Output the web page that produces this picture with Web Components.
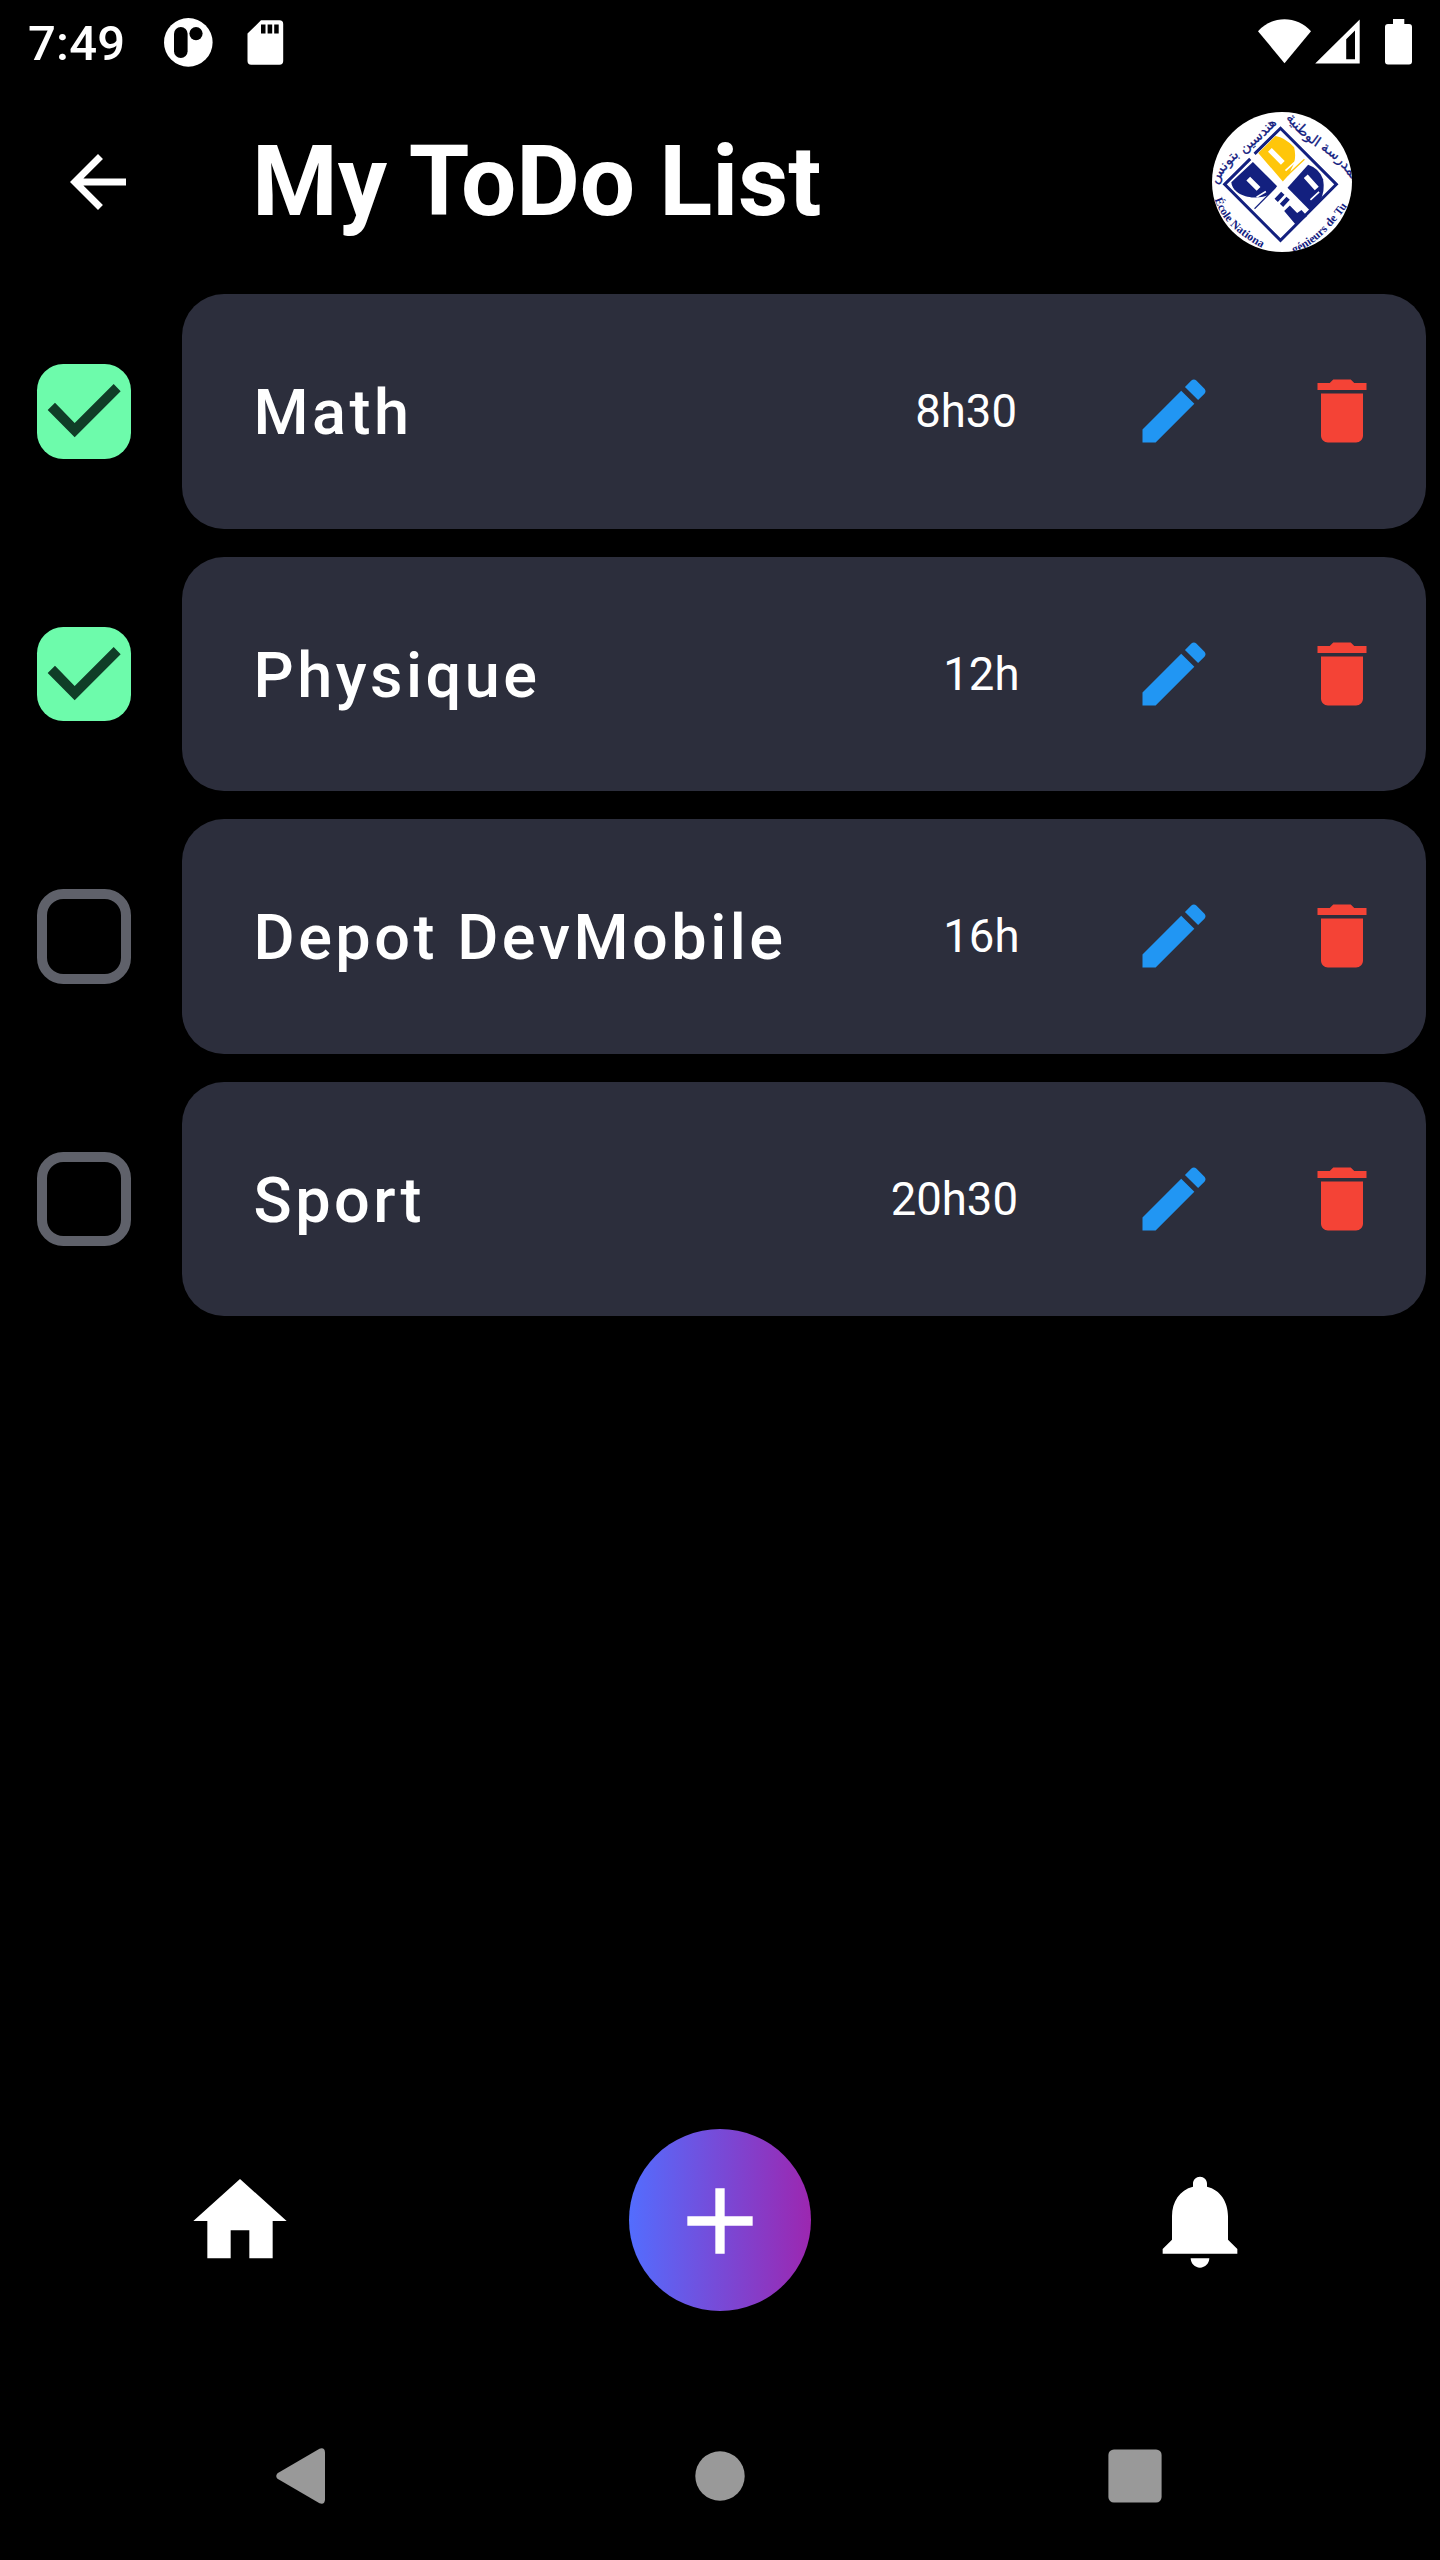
<!DOCTYPE html>
<html lang="fr">
<head>
<meta charset="utf-8">
<title>My ToDo List</title>
<style>
  html, body { margin: 0; background: #000; }
  body { width: 1440px; height: 2560px; overflow: hidden; font-family: Roboto, "Liberation Sans", sans-serif; color: #fff; }
</style>
</head>
<body>
<todo-app></todo-app>
<script>
const define = (name, html, setup) => customElements.define(name, class extends HTMLElement {
  constructor() {
    super();
    this.attachShadow({ mode: 'open' });
  }
  connectedCallback() {
    this.shadowRoot.innerHTML = html;
    if (setup) setup(this, this.shadowRoot);
  }
});

const ICONS = {
  back: 'M20 11H7.83l5.59-5.59L12 4l-8 8 8 8 1.41-1.41L7.83 13H20v-2z',
  edit: 'M3 17.25V21h3.75L17.81 9.94l-3.75-3.75L3 17.25zM20.71 7.04c.39-.39.39-1.02 0-1.41l-2.34-2.34c-.39-.39-1.02-.39-1.41 0l-1.83 1.83 3.75 3.75 1.83-1.83z',
  trash: 'M6 19c0 1.1.9 2 2 2h8c1.1 0 2-.9 2-2V7H6v12zM19 4h-3.5l-1-1h-5l-1 1H5v2h14V4z',
  home: 'M10 20v-6h4v6h5v-8h3L12 3 2 12h3v8z',
  add: 'M19 13h-6v6h-2v-6H5v-2h6V5h2v6h6v2z',
  bell: 'M12 22c1.1 0 2-.9 2-2h-4c0 1.1.89 2 2 2zm6-6v-5c0-3.07-1.64-5.64-4.5-6.32V4c0-.83-.67-1.5-1.5-1.5s-1.5.67-1.5 1.5v.68C7.63 5.36 6 7.92 6 11v5l-2 2v1h16v-1l-2-2z'
};

define('md-icon', `
  <style>
    :host { display: block; width: 84px; height: 84px; flex: none; }
    svg { display: block; width: 100%; height: 100%; fill: currentColor; }
  </style>
  <svg viewBox="0 0 24 24"><path/></svg>`,
  (el, root) => root.querySelector('path').setAttribute('d', ICONS[el.getAttribute('name')]));

define('status-bar', `
  <style>
    :host { display: flex; height: 84px; box-sizing: border-box; justify-content: space-between; padding: 0 28px; }
    .left, .right { display: flex; align-items: center; }
    .time { font-size: 49px; font-weight: 500; line-height: 58px; padding-top: 3px; letter-spacing: .2px; width: 136px; }
    svg { display: block; fill: #fff; }
  </style>
  <div class="left">
    <span class="time">7:49</span>
    <svg width="130" height="84" viewBox="164 0 130 84">
      <circle cx="188.3" cy="42.4" r="24.3"/>
      <rect x="174" y="27" width="13.6" height="31" rx="6.8" fill="#000"/>
      <circle cx="196" cy="33.6" r="6.6" fill="#000"/>
      <path d="M261 20.3h18.500a3.700 3.700 0 0 1 3.700 3.700v37a3.700 3.700 0 0 1-3.700 3.700h-28.300a3.700 3.700 0 0 1-3.700-3.700v-27.500z"/>
      <path fill="#000" d="M261 24.500h4.500v9h-4.500zM267.600 24.500h4.600v9h-4.600zM274.200 24.500h4.500v9h-4.500z"/>
    </svg>
  </div>
  <div class="right">
    <svg width="156" height="84" viewBox="1256 0 156 84">
      <path d="M1258 31.200C1272 15.200 1297 15.200 1311 31.200L1284.500 63.200z"/>
      <path fill-rule="evenodd" d="M1359.700 19.500V63.600H1315.200zM1355 30.500L1346.200 39.300V59.200H1355z"/>
      <path d="M1393 19h11.300v5h4.700a3 3 0 0 1 3 3v34.600a3 3 0 0 1-3 3h-21a3 3 0 0 1-3-3v-34.600a3 3 0 0 1 3-3h5z"/>
    </svg>
  </div>`);

define('school-logo', `
  <style>
    :host { display: block; width: 140px; height: 140px; border-radius: 50%; overflow: hidden; background: #fff; }
    svg { display: block; }
    text { fill: #13207f; font-family: "Liberation Serif", serif; font-weight: 700; font-size: 35px; text-rendering: geometricPrecision; }
    .ar { font-family: "DejaVu Sans", sans-serif; font-weight: 400; font-size: 42px; stroke: #13207f; stroke-width: .8px; }
  </style>
  <svg width="140" height="140" viewBox="66 66 421 421">
    <defs>
      <path id="fl" d="M74 328Q94 390 150 432T250 490"/>
      <path id="fr" d="M312 491Q370 468 418 416T492 318"/>
      <path id="al" d="M80 284Q114 219 167 184T276 82"/>
      <path id="ar" d="M288 84Q340 150 394 180T492 278"/>
    </defs>
    <g fill="none" stroke="#13207f" stroke-width="9">
      <path d="M181 207L104 283.500L272 452L440 283.500L272 115L194 192"/>
      <path d="M258 292L194 357" stroke-width="3.500"/>
    </g>
    <path fill="#ffc60a" d="M257 138L205 189L279 275L300 252L304 238Q322 210 313 172Q285 142 257 138z"/>
    <path stroke="#ffc60a" stroke-width="4" d="M292 257L344 208"/>
    <path stroke="#fff" stroke-width="16" d="M240 180L279 219"/>
    <path stroke="#fff" stroke-width="5" d="M287 242L316 216"/>
    <g fill="#13207f">
      <path d="M189 216L262 289L236 315C205 332 130 324 124 277z"/>
      <path d="M355 225Q388 236 400 268Q407 305 390 335L362 364L293 294z"/>
      <path d="M254 327L274 306L284 315L264 337zM270 342L290 321L300 330L280 352zM283 364L300 347L322 370L335 361L352 379L318 405z"/>
    </g>
    <path stroke="#fff" stroke-width="16" d="M175 266L206 297M348 259L381 296"/>
    <path stroke="#fff" stroke-width="5" d="M200 322L228 305M362 330L388 306"/>
    <text><textPath href="#fl">École Nationa</textPath></text>
    <text><textPath href="#fr">génieurs de Tu</textPath></text>
    <text class="ar"><textPath href="#al">هندسين بتونس</textPath></text>
    <text class="ar"><textPath href="#ar">المدرسة الوطنية</textPath></text>
  </svg>`);

define('app-header', `
  <style>
    :host { display: flex; align-items: center; height: 196px; padding: 0 88px 0 56px; }
    h1 { flex: 1; margin: 0 0 0 112px; font-size: 98px; line-height: 116px; font-weight: 700; letter-spacing: -.1px; white-space: nowrap; }
  </style>
  <md-icon name="back"></md-icon>
  <h1><slot></slot></h1>
  <school-logo></school-logo>`);

define('check-box', `
  <style>
    :host { display: block; width: 94.5px; height: 94.5px; }
    .box { box-sizing: border-box; width: 100%; height: 100%; border: 10.5px solid #5f616a; border-radius: 26.25px; }
    svg { display: none; width: 100%; height: 100%; }
    :host([checked]) .box { border: 0; background: #6dfbab; }
    :host([checked]) svg { display: block; }
  </style>
  <div class="box"><svg viewBox="0 0 283.500 283.500"><path fill="#103d27" d="M32 138L113 220L251 82L230 60L113 177L54 116z"/></svg></div>`);

define('todo-item', `
  <style>
    :host { display: flex; align-items: center; height: 234.5px; padding: 0 14px 0 36.75px; gap: 50.75px; }
    .card { flex: 1; box-sizing: border-box; height: 100%; display: flex; align-items: center; padding: 0 42px 0 71.5px;
            background: #2c2e3c; border-radius: 42px; }
    .name { flex: 1; font-size: 63px; font-weight: 500; letter-spacing: 3.5px; line-height: 74px; white-space: nowrap; padding-top: 4px; }
    .time { font-size: 45.5px; line-height: 54px; padding-top: 2px; }
    .icons { display: flex; gap: 84px; width: 252px; margin-left: 114px; }
    .edit { color: #2196f3; }
    .trash { color: #f44336; }
    :host([time="8h30"]) .icons { margin-left: 115px; }
    :host([time="12h"]) .icons, :host([time="16h"]) .icons { margin-left: 112.5px; }
  </style>
  <check-box></check-box>
  <div class="card">
    <span class="name"><slot></slot></span>
    <span class="time"></span>
    <div class="icons">
      <md-icon class="edit" name="edit"></md-icon>
      <md-icon class="trash" name="trash"></md-icon>
    </div>
  </div>`,
  (el, root) => {
    root.querySelector('.time').textContent = el.getAttribute('time');
    root.querySelector('check-box').toggleAttribute('checked', el.hasAttribute('done'));
  });

define('tab-bar', `
  <style>
    :host { display: grid; grid-template-columns: 1fr 1fr 1fr; width: 1440px; height: 344px; align-items: center; justify-items: center; }
    md-icon { width: 112px; height: 112px; }
    .tab, .fab md-icon { padding-top: 2px; }
    .fab { width: 182px; height: 182px; border-radius: 50%; display: flex; align-items: center; justify-content: center;
           background: linear-gradient(90deg, #536dfe, #9c27b0); }
  </style>
  <div class="tab"><md-icon name="home"></md-icon></div>
  <div class="fab"><md-icon name="add"></md-icon></div>
  <div class="tab"><md-icon name="bell"></md-icon></div>`);

define('system-nav', `
  <style>
    :host { display: flex; height: 168px; align-items: center; padding-left: 276px; }
    svg { display: block; fill: #999; }
    .home { margin: 0 363.4px 0 370px; }
  </style>
  <svg width="49" height="56" viewBox="0 0 49 56"><path d="M1.500 25.200Q-1 28 1.500 30.800L43.500 55.300Q48.700 57 49 51.500V4.500Q48.700-1 43.500.7z"/></svg>
  <svg class="home" width="50" height="50" viewBox="0 0 50 50"><circle cx="25" cy="25" r="24.700"/></svg>
  <svg width="54" height="54" viewBox="0 0 54 54"><rect x=".4" y=".4" width="53.200" height="53.200" rx="5.500"/></svg>`);

define('todo-app', `
  <style>
    :host { display: flex; flex-direction: column; width: 1440px; height: 2560px; background: #000; }
    main { flex: 1; display: flex; flex-direction: column; gap: 28px; padding-top: 14px; }
  </style>
  <status-bar></status-bar>
  <app-header>My ToDo List</app-header>
  <main>
    <todo-item time="8h30" done>Math</todo-item>
    <todo-item time="12h" done>Physique</todo-item>
    <todo-item time="16h">Depot DevMobile</todo-item>
    <todo-item time="20h30">Sport</todo-item>
  </main>
  <tab-bar></tab-bar>
  <system-nav></system-nav>`);
</script>
</body>
</html>
